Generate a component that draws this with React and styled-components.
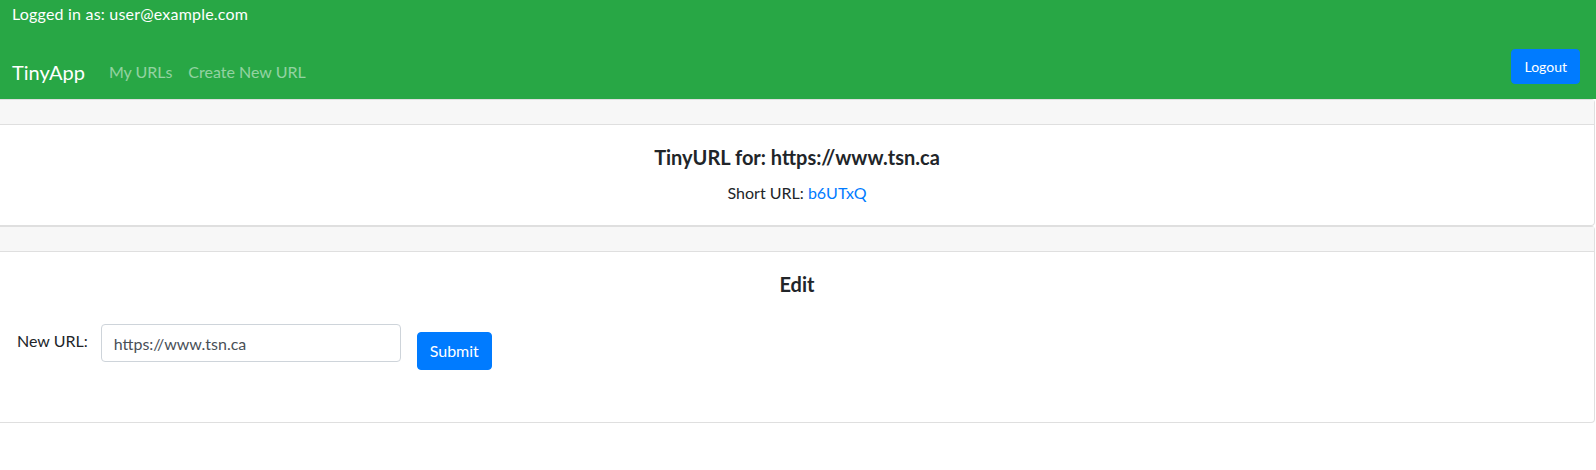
import React, { useState } from "react";
import styled, { createGlobalStyle } from "styled-components";

const GlobalStyle = createGlobalStyle`
  body {
    margin: 0;
    background: #fff;
    color: #212529;
    font-family: Lato, "Open Sans", sans-serif;
    font-size: 16px;
    line-height: 1.5;
  }
  * { box-sizing: border-box; }
`;

const Header = styled.header`
  background: #28a745;
  height: 99px;
  padding: 2px 16px 0 12px;
  display: flex;
  flex-direction: column;
`;

const LoginLine = styled.div`
  color: #fff;
  line-height: 24px;
  letter-spacing: 0.2px;
`;

const NavRow = styled.nav`
  display: flex;
  align-items: center;
  height: 40px;
  margin-top: 26px;
`;

const Brand = styled.a`
  color: #fff;
  font-size: 20px;
  line-height: 30px;
  margin-right: 16px;
  text-decoration: none;
`;

const NavLink = styled.a`
  color: rgba(255, 255, 255, 0.5);
  padding: 0 8px;
  line-height: 24px;
  text-decoration: none;
`;

const Spacer = styled.div`
  flex: 1;
`;

const Button = styled.button`
  background: #007bff;
  border: 1px solid #007bff;
  color: #fff;
  font-family: inherit;
  font-size: ${(p) => (p.small ? "14px" : "16px")};
  line-height: ${(p) => (p.small ? "21px" : "24px")};
  padding: 6px 12px;
  border-radius: 4px;
  cursor: pointer;
  margin-top: ${(p) => p.offset || "0"};
  margin-bottom: ${(p) => p.lift || "0"};
`;

const Card = styled.section`
  border: 1px solid #dfdfdf;
  border-left: 0;
  border-radius: 0 4px 4px 0;
  background: #fff;
  margin-right: 1px;
`;

const CardHeader = styled.div`
  background: #f7f7f7;
  height: 25px;
  border-bottom: 1px solid #dfdfdf;
`;

const CardBody = styled.div`
  padding: 20px 20px;
  text-align: center;
`;

const Title = styled.h5`
  margin: 0 0 12px;
  font-size: 20px;
  line-height: 24px;
  font-weight: 700;
`;

const CardText = styled.p`
  margin: 0;
`;

const Link = styled.a`
  color: #007bff;
  text-decoration: none;
`;

const FormRow = styled.form`
  display: flex;
  align-items: flex-start;
  text-align: left;
  margin: 28px 0 0 -3px;
  padding-bottom: 32px;
`;

const Label = styled.label`
  line-height: 24px;
  margin-top: 5px;
  margin-right: 13px;
`;

const Input = styled.input`
  width: 300px;
  height: 38px;
  padding: 6px 12px;
  font-family: inherit;
  font-size: 16px;
  color: #495057;
  border: 1px solid #ced4da;
  border-radius: 4px;
  margin-right: 16px;
  outline: none;
`;

export default function App() {
  const [url, setUrl] = useState("https://www.tsn.ca");

  return (
    <>
      <GlobalStyle />
      <Header>
        <LoginLine>Logged in as: user@example.com</LoginLine>
        <NavRow>
          <Brand href="#">TinyApp</Brand>
          <NavLink href="#">My URLs</NavLink>
          <NavLink href="#">Create New URL</NavLink>
          <Spacer />
          <Button small lift="11px">Logout</Button>
        </NavRow>
      </Header>
      <Card>
        <CardHeader />
        <CardBody>
          <Title>TinyURL for: https://www.tsn.ca</Title>
          <CardText>
            Short URL: <Link href="#">b6UTxQ</Link>
          </CardText>
        </CardBody>
      </Card>
      <Card>
        <CardHeader />
        <CardBody>
          <Title>Edit</Title>
          <FormRow onSubmit={(e) => e.preventDefault()}>
            <Label htmlFor="longURL">New URL:</Label>
            <Input
              id="longURL"
              value={url}
              onChange={(e) => setUrl(e.target.value)}
            />
            <Button type="submit" offset="8px">Submit</Button>
          </FormRow>
        </CardBody>
      </Card>
    </>
  );
}
